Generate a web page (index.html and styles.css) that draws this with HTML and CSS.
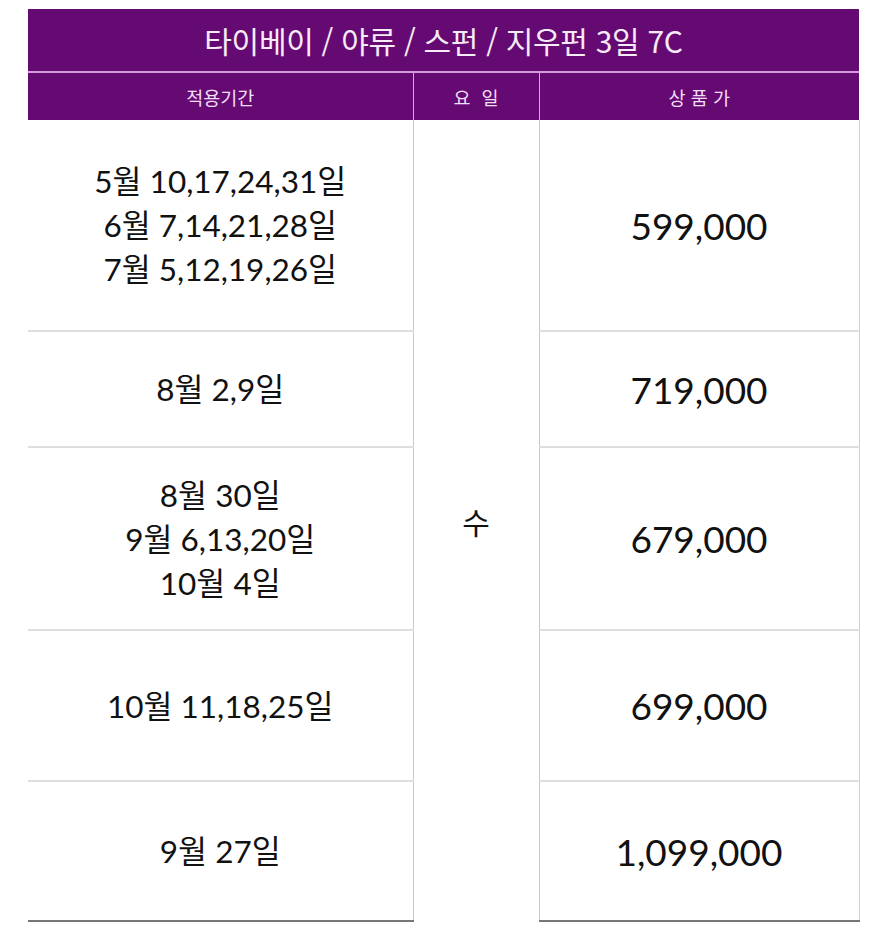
FILE: index.html
```html
<!DOCTYPE html>
<html lang="ko">
<head>
<meta charset="utf-8">
<link rel="stylesheet" href="styles.css">
</head>
<body>
<table class="price">
  <colgroup>
    <col class="col-period">
    <col class="col-day">
    <col class="col-amount">
  </colgroup>
  <thead>
    <tr class="title-row"><th colspan="3">타이베이 / 야류 / 스펀 / 지우펀 3일 7C</th></tr>
    <tr class="head-row">
      <th class="c1">적용기간</th>
      <th class="c2">요 일</th>
      <th class="c3">상 품 가</th>
    </tr>
  </thead>
  <tbody>
    <tr class="r1">
      <td class="period">5월 10,17,24,31일<br>6월 7,14,21,28일<br>7월 5,12,19,26일</td>
      <td class="day" rowspan="5">수</td>
      <td class="amount">599,000</td>
    </tr>
    <tr class="r2">
      <td class="period">8월 2,9일</td>
      <td class="amount">719,000</td>
    </tr>
    <tr class="r3">
      <td class="period">8월 30일<br>9월 6,13,20일<br>10월 4일</td>
      <td class="amount">679,000</td>
    </tr>
    <tr class="r4">
      <td class="period">10월 11,18,25일</td>
      <td class="amount">699,000</td>
    </tr>
    <tr class="r5">
      <td class="period">9월 27일</td>
      <td class="amount">1,099,000</td>
    </tr>
  </tbody>
</table>
</body>
</html>
```

FILE: styles.css
```css
html, body {
  margin: 0;
  padding: 0;
  background: #ffffff;
}

body {
  padding: 9px 0 0 28px;
  font-family: Lato, "Noto Sans CJK KR", sans-serif;
  color: #111111;
}

.price {
  width: 831px;
  border-collapse: collapse;
  table-layout: fixed;
}

.col-period { width: 385px; }
.col-day { width: 126px; }
.col-amount { width: 320px; }

.price th,
.price td {
  padding: 0;
  text-align: center;
  vertical-align: middle;
}

.title-row th {
  height: 62px;
  background: #650a73;
  color: #f6ebf7;
  font-family: "Noto Sans CJK KR", sans-serif;
  font-weight: 400;
  font-size: 30px;
  letter-spacing: -0.3px;
  border-bottom: 2px solid #d49be0;
}

.head-row th {
  height: 47px;
  background: #650a73;
  color: #f2dff5;
  font-family: "Noto Sans CJK KR", sans-serif;
  font-weight: 400;
  font-size: 18.5px;
}

.head-row .c2 {
  word-spacing: 6px;
  border-left: 1px solid #d6a8de;
  border-right: 1px solid #d6a8de;
}

.period {
  font-size: 31.5px;
  line-height: 44px;
  border-top: 2px solid #dedede;
}

.amount {
  font-size: 37px;
  border-top: 2px solid #dedede;
  border-right: 1px solid #cfcfcf;
}

.day {
  font-family: "Noto Sans CJK KR", sans-serif;
  font-size: 30px;
  border-left: 1px solid #c8c8c8;
  border-right: 1px solid #c8c8c8;
}

tbody .r1 .period,
tbody .r1 .amount {
  border-top: none;
}

.r1 { height: 211px; }
.r2 { height: 116px; }
.r3 { height: 183px; }
.r4 { height: 151px; }
.r5 { height: 140px; }

.r5 td {
  border-bottom: 2px solid #777777;
}
```
